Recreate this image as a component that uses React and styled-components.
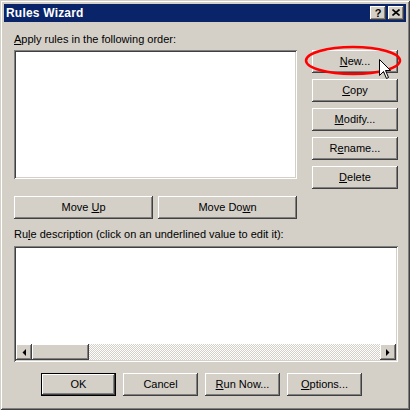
import React from 'react';
import styled, { createGlobalStyle, css } from 'styled-components';

const Global = createGlobalStyle`
  html, body { margin: 0; padding: 0; background: #d4d0c8; }
  body { font-family: "Liberation Sans", Arial, sans-serif; font-size: 11px; color: #000; }
  * { box-sizing: border-box; }
`;

const raised = css`
  background: #d4d0c8;
  box-shadow: inset -1px -1px #404040, inset 1px 1px #ffffff, inset -2px -2px #808080, inset 2px 2px #d4d0c8;
`;

const sunken = css`
  box-shadow: inset 1px 1px #808080, inset -1px -1px #ffffff, inset 2px 2px #404040, inset -2px -2px #d4d0c8;
`;

const Window = styled.div`
  position: relative;
  width: 410px;
  height: 410px;
  background: #d4d0c8;
  padding: 4px;
  box-shadow: inset 1px 1px #d4d0c8, inset -1px -1px #404040, inset 2px 2px #ffffff, inset -2px -2px #808080;
  display: flex;
  flex-direction: column;
`;

const TitleBar = styled.div`
  height: 18px;
  background: #0a246a;
  display: flex;
  align-items: center;
  justify-content: space-between;
  padding: 0 2px 0 2px;
`;

const Title = styled.span`
  color: #fff;
  font-weight: bold;
  font-size: 12px;
  letter-spacing: 0.2px;
`;

const TitleButtons = styled.div`
  display: flex;
  gap: 2px;
`;

const TitleButton = styled.div`
  ${raised};
  width: 16px;
  height: 14px;
  display: flex;
  align-items: center;
  justify-content: center;
  font-weight: bold;
  font-size: 11px;
  line-height: 14px;
  padding-bottom: 1px;
`;

const Body = styled.div`
  padding: 10px 8px 0 10px;
  display: flex;
  flex-direction: column;
`;

const Label = styled.div`
  height: 14px;
  line-height: 14px;
  margin: ${p => p.$top || 0}px 0 ${p => p.$bottom || 0}px 0;
  white-space: nowrap;
`;

const U = styled.span`
  text-decoration: underline;
  text-underline-offset: 1px;
`;

const TopRow = styled.div`
  display: grid;
  grid-template-columns: 283px 86px;
  column-gap: 15px;
`;

const LeftCol = styled.div`
  display: flex;
  flex-direction: column;
  gap: 17px;
`;

const ListBox = styled.div`
  ${sunken};
  background: #fff;
  height: 129px;
`;

const MoveRow = styled.div`
  display: flex;
  gap: 5px;
`;

const Button = styled.div`
  ${raised};
  position: relative;
  width: ${p => p.$w || 86}px;
  height: 23px;
  display: flex;
  align-items: center;
  justify-content: center;
  line-height: 13px;
  white-space: nowrap;
  ${p => p.$default && css`
    box-shadow: inset 0 0 0 1px #000, inset -2px -2px #404040, inset 2px 2px #ffffff, inset -3px -3px #808080, inset 3px 3px #d4d0c8;
  `}
`;

const RightCol = styled.div`
  display: flex;
  flex-direction: column;
  gap: 6px;
`;

const DescBox = styled.div`
  ${sunken};
  background: #fff;
  height: 116px;
  padding: 2px;
  display: flex;
  flex-direction: column;
`;

const DescArea = styled.div`
  flex: 1;
`;

const ScrollBar = styled.div`
  height: 16px;
  display: flex;
`;

const ScrollBtn = styled.div`
  ${raised};
  width: 16px;
  height: 16px;
  display: flex;
  align-items: center;
  justify-content: center;
`;

const Thumb = styled.div`
  ${raised};
  width: 57px;
  height: 16px;
`;

const Track = styled.div`
  flex: 1;
  height: 16px;
  background: repeating-conic-gradient(#ffffff 0 25%, #d4d0c8 0 50%) 0 0 / 2px 2px;
`;

const Footer = styled.div`
  display: flex;
  gap: 7px;
  margin: 11px 0 0 27px;
`;

const Highlight = styled.svg`
  position: absolute;
  left: 303px;
  top: 44px;
  pointer-events: none;
`;

const Cursor = styled.svg`
  position: absolute;
  left: 379px;
  top: 59px;
  pointer-events: none;
`;

const Arrow = ({ dir }) => (
  <svg width="4" height="7" viewBox="0 0 4 7">
    {dir === 'left'
      ? <polygon points="4,0 4,7 0.5,3.5" fill="#000" />
      : <polygon points="0,0 0,7 3.5,3.5" fill="#000" />}
  </svg>
);

export default function App() {
  return (
    <>
      <Global />
      <Window>
        <TitleBar>
          <Title>Rules Wizard</Title>
          <TitleButtons>
            <TitleButton>?</TitleButton>
            <TitleButton>
              <svg width="8" height="7" viewBox="0 0 8 7">
                <path d="M0.5 0.5 L7.5 6.5 M7.5 0.5 L0.5 6.5" stroke="#000" strokeWidth="1.6" />
              </svg>
            </TitleButton>
          </TitleButtons>
        </TitleBar>
        <Body>
          <Label $bottom={4}><U>A</U>pply rules in the following order:</Label>
          <TopRow>
            <LeftCol>
              <ListBox />
              <MoveRow>
                <Button $w={139}>Move&nbsp;<U>U</U>p</Button>
                <Button $w={139}>Move Do<U>w</U>n</Button>
              </MoveRow>
            </LeftCol>
            <RightCol>
              <Button><U>N</U>ew...</Button>
              <Button><U>C</U>opy</Button>
              <Button><U>M</U>odify...</Button>
              <Button>R<U>e</U>name...</Button>
              <Button><U>D</U>elete</Button>
            </RightCol>
          </TopRow>
          <Label $top={8} $bottom={5}>Ru<U>l</U>e description (click on an underlined value to edit it):</Label>
          <DescBox>
            <DescArea />
            <ScrollBar>
              <ScrollBtn><Arrow dir="left" /></ScrollBtn>
              <Thumb />
              <Track />
              <ScrollBtn><Arrow dir="right" /></ScrollBtn>
            </ScrollBar>
          </DescBox>
          <Footer>
            <Button $w={75} $default>OK</Button>
            <Button $w={75}>Cancel</Button>
            <Button $w={75}><U>R</U>un Now...</Button>
            <Button $w={75}><U>O</U>ptions...</Button>
          </Footer>
        </Body>
        <Highlight width="100" height="33" viewBox="0 0 100 33">
          <ellipse cx="50" cy="16.5" rx="47" ry="13.5" fill="none" stroke="#ff0000" strokeWidth="2.5" />
        </Highlight>
        <Cursor width="13" height="21" viewBox="0 0 13 21">
          <path d="M0.5 0.5 L0.5 16.5 L4.5 12.5 L7.5 19.5 L9.5 18.5 L6.5 11.5 L11.5 11.5 Z" fill="#fff" stroke="#000" strokeWidth="1" strokeLinejoin="miter" />
        </Cursor>
      </Window>
    </>
  );
}
